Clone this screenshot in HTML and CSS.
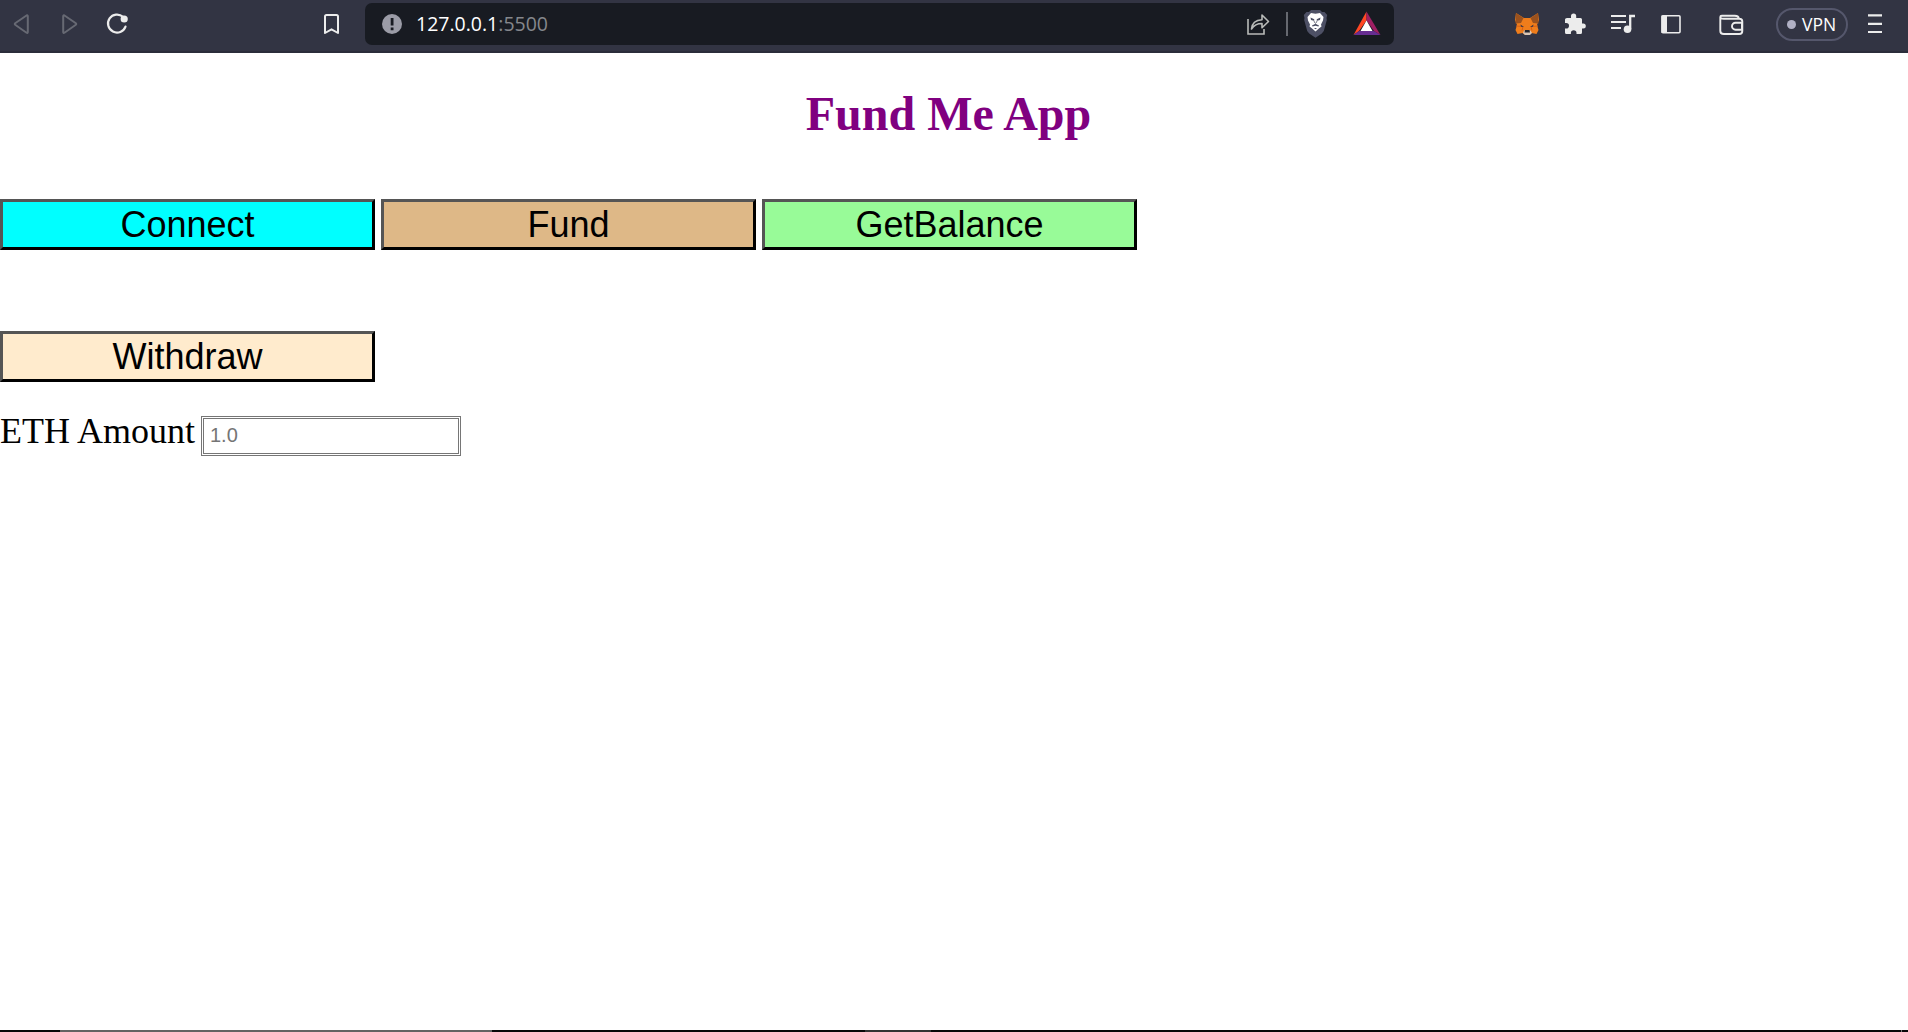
FILE: index.html
```html
<!DOCTYPE html>
<html lang="en">
<head>
<meta charset="utf-8">
<title>Fund Me App</title>
<link rel="stylesheet" href="styles.css">
</head>
<body>
<header class="toolbar">
  <svg class="nav" width="60" height="53" viewBox="0 0 60 53" fill="none">
    <path d="M26.500 15.500 15.500 23q-1.500 1 0 2l11 7.700q1.300.600 1.300-.800V16.200q0-1.300-1.300-.700Z" stroke="#676973" stroke-width="2"/>
  </svg>
  <svg class="forward" width="20" height="53" viewBox="60 0 20 53" fill="none">
    <path d="m64.500 15.500 11 7.500q1.500 1 0 2l-11 7.700q-1.300.600-1.300-.800V16.200q0-1.300 1.300-.700Z" stroke="#676973" stroke-width="2"/>
  </svg>
  <svg class="reload" width="26" height="53" viewBox="104 0 26 53" fill="none">
    <path d="M123 16.800a9 9 0 1 0 2.500 9.800" stroke="#ececec" stroke-width="2.200" stroke-linecap="round"/>
    <circle cx="124.200" cy="19" r="3.600" fill="#ececec"/>
  </svg>
  <svg class="bookmark" width="20" height="53" viewBox="322 0 20 53" fill="none">
    <path d="M325 16.500q0-1.500 1.500-1.500h10q1.500 0 1.500 1.500V33l-6.500-3.700L325 33Z" stroke="#ececec" stroke-width="2" stroke-linejoin="round"/>
  </svg>
  <div class="address">
    <svg class="info" width="20" height="42" viewBox="0 0 20 42">
      <circle cx="10" cy="21" r="10" fill="#9b9ca7"/>
      <path d="M8.700 15h2.800v7.500H8.700zM8.700 24.500h2.800v2.700H8.700z" fill="#181b22"/>
    </svg>
    <span class="url"><span class="host">127.0.0.1</span><span class="port">:5500</span></span>
    <svg class="tools" width="164" height="42" viewBox="1230 3 164 42" fill="none">
      <path d="M1248 19v15h16v-5" stroke="#b9bbb9" stroke-width="1.600"/>
      <path d="M1251.500 29c.500-6 4-9 10.500-9.300V15l6.500 6.500-6.500 6.300v-4.300c-5 0-8 1.500-10.500 5.500Z" stroke="#b9bbb9" stroke-width="1.600" stroke-linejoin="round"/>
      <path d="M1287 12v24" stroke="#666970" stroke-width="2"/>
      <path d="M1311 10h9l2 2h2.500l2.700 3-.7 3 .3 2-3 11-2 2.500-6.300 4.300-6.300-4.300-2-2.500-3-11 .3-2-.7-3 2.700-3h2.500Z" fill="#4d5065"/>
      <path d="m1311 13 4.500.7 4.500-.7 3.500 4-.5 3.500-2 4 .5 2-2.300 1.800-3.700 3.200-3.700-3.200-2.300-1.800.5-2-2-4-.5-3.500Z" fill="#fff"/>
      <path d="m1310.500 17.500 3.800 1.700-.3 1.600-3-.8Zm10 0-3.800 1.700.3 1.600 3-.8ZM1312 25.500l3.500-1.700 3.500 1.700-.5 1-3-.7-3 .7ZM1314 28h3l-1.500 1.200Z" fill="#4d5065"/>
      <path d="m1314 20.500.3 1.500 1.200 1.500 1.200-1.500.3-1.500" stroke="#7b7d89"/>
      <path d="M1366.500 11.500v9L1359 31l-5.500 4Z" fill="#ff4724"/>
      <path d="M1366.500 11.500v9L1374 31l6.500 4Z" fill="#9e1f63"/>
      <path d="m1353.500 35 5.500-4h15l6.500 4Z" fill="#662d91"/>
      <path d="m1366.500 20.500-6 10.500h12Z" fill="#fff"/>
    </svg>
  </div>
  <svg class="extensions" width="240" height="53" viewBox="1510 0 240 53" fill="none">
    <path d="m1516 13 8 5h6l8-5 1 7-2 5 1.500 5-2 4-5-1-2.500 2h-4l-2.500-2-5 1-2-4 1.500-5-2-5Z" fill="#ef7d1b"/>
    <path d="m1516 13 7.500 5-2.500 5-5.500.500Zm22 0-7.500 5 2.500 5 5.500.500Z" fill="#9b511d"/>
    <path d="m1516 26 7 .5-1 4m16-4.500-7 .5 1 4" stroke="#d75f16"/>
    <path d="m1520.500 24.500 3.500 2.500-3-.3Zm13 0-3.500 2.500 3-.3Z" fill="#34374a"/>
    <path d="m1524 30.500h6.500l1.500 2.500-2 2h-5l-2-2Z" fill="#d9c5b5"/>
    <path d="m1525 30h4.500l.5 2.500h-5.500Z" fill="#23252d"/>
    <path d="M1567 18h4v-2a2.600 2.600 0 0 1 5.200 0v2h4.300q1.500 0 1.500 1.500v4h1.300a2.500 2.500 0 0 1 0 5H1582v4q0 1.500-1.500 1.500h-4v-1a2.800 2.800 0 0 0-5.600 0v1h-4.400q-1.500 0-1.500-1.500v-4h1.200a2.800 2.800 0 0 0 0-5.600H1565V19.500q0-1.500 2-1.500Z" fill="#ececec"/>
    <path d="M1611 16h15m-15 6h15m-15 6h10" stroke="#ececec" stroke-width="2.200"/>
    <circle cx="1627.500" cy="29.300" r="3.800" fill="#ececec"/>
    <path d="M1630.200 29V16h4.800" stroke="#ececec" stroke-width="2.300"/>
    <rect x="1662" y="15.700" width="18" height="17" rx="1" stroke="#ececec" stroke-width="1.600"/>
    <path d="M1661.500 15.500h5.500v17.500h-5.500z" fill="#ececec"/>
    <path d="M1720.300 17q0-1.200 1.500-1.200h13q4 0 4 3h-15q-3.500 0-3.500-1.800v14q0 3 3.500 3h15.500q3 0 3-3v-9.500q0-2.700-3-2.700" stroke="#ececec" stroke-width="1.900"/>
    <path d="M1742 22.700h-6.500a3.500 3.500 0 0 0 0 7h6.500Z" stroke="#ececec" stroke-width="1.900"/>
  </svg>
  <div class="vpn"><span class="status"></span><span class="vpn-label">VPN</span></div>
  <svg class="menu" width="16" height="53" viewBox="0 0 16 53">
    <path d="M1 15.400h14M1 23.800h14M1 32h14" stroke="#ececec" stroke-width="2.200"/>
  </svg>
</header>
<main class="page">
  <h1 class="title">Fund Me App</h1>
  <div class="actions">
    <button class="button connect">Connect</button>
    <button class="button fund">Fund</button>
    <button class="button balance">GetBalance</button>
    <button class="button withdraw">Withdraw</button>
  </div>
  <div class="amount">
    <label class="label" for="eth">ETH Amount</label>
    <input class="field" id="eth" placeholder="1.0">
  </div>
</main>
<footer class="taskbar"><span class="task-window"></span><span class="task-item"></span><span class="task-edge"></span></footer>
</body>
</html>
```
FILE: styles.css
```css
* { box-sizing: border-box; }
body {
  margin: 0;
  height: 1032px;
  display: flex;
  flex-direction: column;
  overflow: hidden;
  background: #fff;
  font-family: "Liberation Serif", serif;
}
svg { display: block; flex: none; }
.toolbar {
  height: 53px;
  flex: none;
  display: flex;
  align-items: flex-start;
  background: #323443;
  border-bottom: 2px solid #2b2d3b;
  font-family: "Open Sans", sans-serif;
}
.reload { margin-left: 24px; }
.bookmark { margin-left: 192px; }
.address {
  width: 1029px;
  height: 42px;
  margin: 3px 0 0 23px;
  padding-left: 17px;
  flex: none;
  display: flex;
  align-items: center;
  border-radius: 7px;
  background: #181b22;
}
.url { margin-left: 14px; font-size: 19.5px; line-height: 42px; white-space: nowrap; }
.host { color: #fff; }
.port { color: #85878c; }
.tools { margin-left: auto; }
.extensions { margin-left: 116px; }
.vpn {
  width: 72px;
  height: 33px;
  margin: 8px 0 0 26px;
  flex: none;
  display: flex;
  align-items: center;
  border: 2px solid #55576c;
  border-radius: 17px;
  color: #fff;
  font-size: 17.5px;
}
.status { width: 9px; height: 9px; margin: 0 6px 0 9px; border-radius: 50%; background: #b0b0c4; }
.vpn-label { line-height: 29px; }
.menu { margin-left: 19px; }
.page { flex: 1; }
.title {
  width: 1897px;
  margin: 33px 0 58px;
  font-size: 48px;
  line-height: 55px;
  text-align: center;
  color: purple;
}
.actions { display: grid; grid-template-columns: repeat(3, 375px); gap: 81px 6px; }
.button {
  height: 51px;
  padding: 0;
  border: 3px outset #000;
  border-color: #555 #000 #000 #555;
  font: 36px/41px "Liberation Sans", sans-serif;
  color: #000;
}
.connect { background: aqua; }
.fund { background: burlywood; }
.balance { background: palegreen; }
.withdraw { background: blanchedalmond; }
.amount { display: flex; align-items: flex-start; margin-top: 34px; font-size: 36px; line-height: 41px; }
.label { width: 201px; margin-top: -5px; white-space: nowrap; }
.field {
  width: 260px;
  height: 40px;
  padding: 0 6px 1px;
  border: 3px double #767676;
  font: 20px "Liberation Sans", sans-serif;
}
.field::placeholder { color: #757575; }
.taskbar { height: 2px; flex: none; display: flex; background: #080808; }
.task-window { width: 432px; margin-left: 60px; background: #626262; }
.task-item { width: 66px; margin-left: 373px; background: #333; }
.task-edge { width: 1px; margin-left: 970px; background: #777; }
```
